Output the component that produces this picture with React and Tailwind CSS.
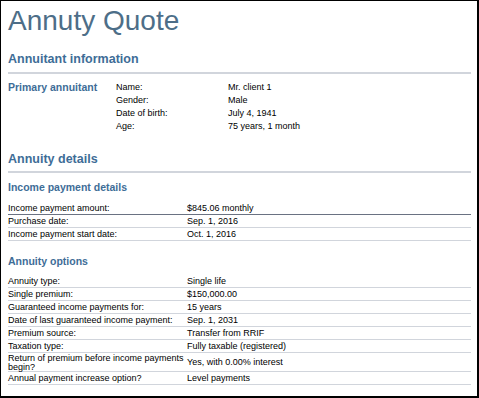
const annuitant = [
  ['Name:', 'Mr. client 1'],
  ['Gender:', 'Male'],
  ['Date of birth:', 'July 4, 1941'],
  ['Age:', '75 years, 1 month'],
]

const income = [
  ['Income payment amount:', '$845.06 monthly'],
  ['Purchase date:', 'Sep. 1, 2016'],
  ['Income payment start date:', 'Oct. 1, 2016'],
]

const options = [
  ['Annuity type:', 'Single life'],
  ['Single premium:', '$150,000.00'],
  ['Guaranteed income payments for:', '15 years'],
  ['Date of last guaranteed income payment:', 'Sep. 1, 2031'],
  ['Premium source:', 'Transfer from RRIF'],
  ['Taxation type:', 'Fully taxable (registered)'],
  ['Return of premium before income payments begin?', 'Yes, with 0.00% interest'],
  ['Annual payment increase option?', 'Level payments'],
]

function DetailTable({ rows, strongFirst }) {
  return (
    <div className="mr-[4px]">
      {rows.map(([label, value], i) => (
        <div
          key={label}
          className={`grid grid-cols-[179px_1fr] items-center min-h-[13px] pt-[1px] leading-[8.5px] border-b ${
            strongFirst && i === 0 ? 'border-gray-500' : 'border-gray-300'
          }`}
        >
          <span className="pr-[2px]">{label}</span>
          <span>{value}</span>
        </div>
      ))}
    </div>
  )
}

export default function App() {
  return (
    <div
      className="w-[479px] h-[398px] bg-white border border-black border-r-2 border-b-2 pl-[7px] pr-[2px] text-black text-[9px]"
      style={{ fontFamily: '"Liberation Sans", Arial, sans-serif' }}
    >
      <h1 className="text-[28px] leading-none text-[#4d6e88] pt-[6px]">Annuty Quote</h1>

      {/* Annuitant information */}
      <h2 className="mt-[18px] text-[12.5px] font-bold leading-none text-[#3e6d97]">Annuitant information</h2>
      <div className="mt-[6px] mr-[4px] border-t-2 border-gray-300" />

      <div className="mt-[7px] grid grid-cols-[108px_112px_1fr] leading-[13px]">
        <h3 className="row-span-4 text-[10.5px] font-bold text-[#3e6d97] leading-[13px]">Primary annuitant</h3>
        {annuitant.map(([label, value]) => (
          <div key={label} className="contents">
            <span>{label}</span>
            <span>{value}</span>
          </div>
        ))}
      </div>

      {/* Annuity details */}
      <h2 className="mt-[20px] text-[12.5px] font-bold leading-none text-[#3e6d97]">Annuity details</h2>
      <div className="mt-[6px] mr-[4px] border-t-2 border-gray-300" />

      <h3 className="mt-[9px] text-[10.5px] font-bold leading-none text-[#3e6d97]">Income payment details</h3>
      <div className="mt-[9px]">
        <DetailTable rows={income} strongFirst />
      </div>

      <h3 className="mt-[15px] text-[10.5px] font-bold leading-none text-[#3e6d97]">Annuity options</h3>
      <div className="mt-[9px]">
        <DetailTable rows={options} />
      </div>
    </div>
  )
}
